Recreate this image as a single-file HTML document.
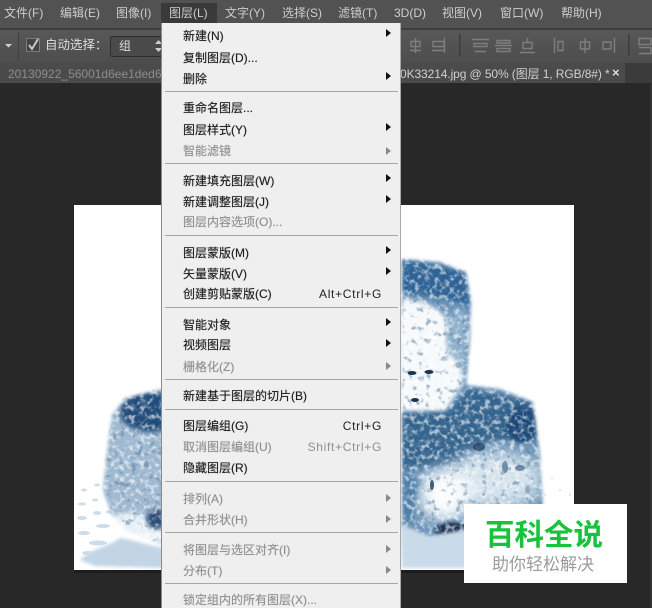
<!DOCTYPE html>
<html><head><meta charset="utf-8">
<style>
html,body{margin:0;padding:0;background:#282828}
#r{position:relative;width:652px;height:608px;overflow:hidden;background:#282828;font-family:"Liberation Sans","Noto Sans CJK SC",sans-serif;font-size:12px}
.a{position:absolute;white-space:nowrap}
.m{position:absolute;top:5px;color:#cdcdcd;line-height:16px}
.i{position:absolute;left:21px;margin-top:1px;line-height:16px;color:#1c1c1c;white-space:nowrap;text-shadow:0 0 .6px rgba(0,0,0,.55)}
.i.d{color:#8f8f8f;text-shadow:0 0 .6px rgba(120,120,120,.5)}
.s{position:absolute;left:3px;width:233px;height:1px;background:#a6a6a6}
.t{position:absolute;left:224px;width:0;height:0;border-left:5px solid #111;border-top:4px solid transparent;border-bottom:4px solid transparent}
.td{border-left-color:#888}
.k{position:absolute;right:18px;margin-top:1px;line-height:16px;color:#222;font-size:12px;letter-spacing:.7px}
.k.d{color:#8f8f8f}
</style></head><body>
<div id="r">
<div class="a" style="left:0;top:0;width:652px;height:28px;background:#525252"></div>
<div class="a" style="left:0;top:28px;width:652px;height:2px;background:#3d3d3d"></div>
<div class="a" style="left:0;top:30px;width:652px;height:33px;background:linear-gradient(#585858,#4d4d4d)"></div>
<div class="a" style="left:0;top:63px;width:652px;height:20px;background:#3b3b3b"></div>
<div class="a" style="left:0;top:63px;width:625px;height:20px;background:#4b4b4b"></div>
<div class="a" style="left:650px;top:83px;width:2px;height:525px;background:#333"></div>

<div class="a" style="left:161px;top:3px;width:56px;height:20px;background:#3a3a3a"></div>
<span class="m" style="left:4px">文件(F)</span>
<span class="m" style="left:60px">编辑(E)</span>
<span class="m" style="left:116px">图像(I)</span>
<span class="m" style="left:169px">图层(L)</span>
<span class="m" style="left:225px">文字(Y)</span>
<span class="m" style="left:282px">选择(S)</span>
<span class="m" style="left:338px">滤镜(T)</span>
<span class="m" style="left:394px">3D(D)</span>
<span class="m" style="left:442px">视图(V)</span>
<span class="m" style="left:500px">窗口(W)</span>
<span class="m" style="left:561px">帮助(H)</span>

<svg class="a" style="left:0;top:30px" width="652" height="33" viewBox="0 30 652 33">
<path d="M5 44h7l-3.500 3.500z" fill="#d0d0d0"/>
<rect x="18" y="32" width="1" height="28" fill="#404040"/>
<rect x="26.500" y="38.500" width="13" height="13" fill="#444" stroke="#7c7c7c"/>
<path d="M29 45l3 4 6-10" fill="none" stroke="#c8c8c8" stroke-width="2"/>
<rect x="110.500" y="36.500" width="60" height="20" rx="2" fill="#4a4a4a" stroke="#2e2e2e"/>
<path d="M155 44l3.500-4 3.500 4zM155 48l3.500 4 3.500-4z" fill="#cfcfcf"/>
<g fill="none" stroke="#7e7e7e" stroke-width="1.400">
<path d="M415.500 38v15M411 41.500h9v5h-9zM410 50.500h11"/>
<path d="M433 41.500h11v5h-11zM432 50.500h12M444.500 38v15"/>
<path d="M472 39.500h17M474 43.500h13v3h-13zM475 51.500h11"/>
<path d="M495 45.500h17M497 40.500h13v2.500h-13zM497 48.500h13v3h-13z"/>
<path d="M520 52.500h15M523 42.500h9v6h-9zM527.500 38v4"/>
<path d="M554.500 38v15M558 41.500h5v9h-5z"/>
<path d="M585 38v15M580.500 42h9v7h-9z"/>
<path d="M614.500 38v15M603 42h8v7h-8z"/>
<path d="M639 38.500h12v6h-12zM639 47.500h12v6h-12"/>
</g>
<rect x="459" y="34" width="1.500" height="22" fill="#3c3c3c"/>
<rect x="628" y="34" width="1.500" height="22" fill="#3c3c3c"/>
</svg>
<div class="a" style="left:45px;top:37px;line-height:16px;color:#dedede;font-size:12.500px">自动选择：</div>
<div class="a" style="left:119px;top:38px;line-height:16px;color:#dedede">组</div>
<div class="a" style="left:8px;top:66px;line-height:16px;color:#8d8d8d;font-size:12px">20130922_56001d6ee1ded6</div>
<div class="a" style="left:400px;top:66px;line-height:16px;color:#cfcfcf;font-size:12px;letter-spacing:-.1px">0K33214.jpg @ 50% (图层 1, RGB/8#) *</div>
<div class="a" style="left:612px;top:65px;line-height:16px;color:#ddd;font-size:13px;font-weight:bold">×</div>

<svg class="a" style="left:74px;top:205px" width="500" height="365" viewBox="74 205 500 365">
<defs>
<filter id="b" x="-20%" y="-20%" width="140%" height="140%"><feGaussianBlur stdDeviation="2.500"/></filter>
<filter id="be" x="-10%" y="-10%" width="120%" height="120%"><feGaussianBlur stdDeviation="1.500"/></filter>
<filter id="b2" x="-40%" y="-40%" width="180%" height="180%"><feGaussianBlur stdDeviation="8"/></filter>
<filter id="n" x="0" y="0" width="100%" height="100%">
<feTurbulence type="fractalNoise" baseFrequency="0.2" numOctaves="2" seed="7"/>
<feColorMatrix values="0 0 0 0 1 0 0 0 0 1 0 0 0 0 1 4 0 0 0 -1.900"/>
</filter>
<filter id="n2" x="0" y="0" width="100%" height="100%">
<feTurbulence type="fractalNoise" baseFrequency="0.16" numOctaves="2" seed="21"/>
<feColorMatrix values="0 0 0 0 0.090 0 0 0 0 0.200 0 0 0 0 0.350 0 5 0 0 -2.850"/>
</filter>
<mask id="c" maskUnits="userSpaceOnUse" x="74" y="205" width="500" height="365">
<g fill="#fff" filter="url(#be)">
<path d="M402 259L440 262 466 272 471 300 470 340 466 385 500 389 533 402 540 455 543 505 520 530 463 530 430 536 402 525z"/>
<path d="M165 388L125 398 112 415 107 450 103 490 112 515 125 530 165 545z"/>
</g>
</mask>
</defs>
<rect x="74" y="205" width="500" height="365" fill="#fff"/>
<!-- puddle and splash -->
<path d="M80 560C92 548 110 546 120 538 135 540 150 546 165 548L165 568 95 566z" fill="#c2d5e5" filter="url(#be)"/>
<g fill="#cddcea">
<ellipse cx="98" cy="543" rx="9" ry="2.500"/><ellipse cx="84" cy="533" rx="6" ry="2"/><ellipse cx="103" cy="526" rx="7" ry="2"/>
<ellipse cx="82" cy="518" rx="5" ry="2"/><ellipse cx="97" cy="513" rx="4" ry="2"/><ellipse cx="82" cy="504" rx="4" ry="1.500"/>
<ellipse cx="95" cy="500" rx="3" ry="1.500"/><ellipse cx="84" cy="490" rx="3" ry="1.500"/><ellipse cx="97" cy="485" rx="3" ry="1.500"/>
<ellipse cx="88" cy="553" rx="6" ry="2"/><ellipse cx="112" cy="512" rx="6" ry="2"/>
</g>
<path d="M400 522L470 530 470 568 402 568z" fill="#c9dbe9" filter="url(#be)"/>
<g mask="url(#c)">
<rect x="95" y="380" width="75" height="175" fill="#9fb9d1"/>
<ellipse cx="150" cy="412" rx="30" ry="20" fill="#234d7a" filter="url(#b)"/>
<ellipse cx="128" cy="525" rx="22" ry="12" fill="#e8f0f6" filter="url(#b)"/>
<ellipse cx="150" cy="535" rx="16" ry="8" fill="#eef4f8" filter="url(#b)"/>
<ellipse cx="156" cy="519" rx="9" ry="10" fill="#1f3f6a" filter="url(#b)" opacity=".9"/>
<rect x="400" y="255" width="150" height="285" fill="#6c95b9"/>
<path d="M400 258L466 272 470 305 440 298 400 292z" fill="#2f6496" filter="url(#b)"/>
<path d="M400 300C430 296 450 318 462 340L462 385 445 412 400 412z" fill="#f6f9fb" filter="url(#b)"/>
<ellipse cx="458" cy="335" rx="12" ry="26" fill="#8fb0cc" filter="url(#b)"/>
<path d="M400 413L447 412 470 388 533 402 538 440 490 440 450 465 400 470z" fill="#34658f" filter="url(#b)"/>
<ellipse cx="522" cy="425" rx="16" ry="18" fill="#1f4a78" filter="url(#b)"/>
<ellipse cx="495" cy="480" rx="48" ry="28" fill="#d5e3ed" filter="url(#b2)"/>
<ellipse cx="445" cy="495" rx="26" ry="26" fill="#fbfdfe" filter="url(#b2)"/>
<path d="M400 470L418 480 412 525 400 510z" fill="#4f7ea8" filter="url(#b)"/>
<ellipse cx="452" cy="530" rx="18" ry="8" fill="#1b3556" filter="url(#be)"/>
<rect x="95" y="255" width="455" height="300" filter="url(#n)" opacity=".6"/>
<rect x="95" y="255" width="455" height="300" filter="url(#n2)" opacity=".55"/>
</g>
<ellipse cx="412" cy="373" rx="4.500" ry="2" fill="#1d3350"/><ellipse cx="429" cy="372" rx="4.500" ry="2" fill="#1d3350"/>
<ellipse cx="415" cy="400" rx="4" ry="2" fill="#1d3350"/>
<ellipse cx="479" cy="447" rx="6" ry="4" fill="#1f3c5e" opacity=".75"/>
<ellipse cx="505" cy="467" rx="3" ry="6" fill="#2f5378" opacity=".6"/><ellipse cx="520" cy="468" rx="5" ry="3" fill="#2f5378" opacity=".6"/>
<ellipse cx="432" cy="485" rx="2" ry="5" fill="#1d3350" opacity=".8"/>
<g fill="#d8e4ee"><circle cx="560" cy="490" r="1.200"/><circle cx="552" cy="478" r="1"/><circle cx="570" cy="495" r="1.200"/><circle cx="545" cy="495" r="1"/></g>
</svg>
<div class="a" style="left:74px;top:570px;width:90px;height:3px;background:#1d1d1d"></div>
<div class="a" style="left:400px;top:570px;width:64px;height:3px;background:#1d1d1d"></div>

<div class="a" style="left:464px;top:504px;width:163px;height:79px;background:#fff"></div>
<div class="a" style="left:485px;top:518px;font-size:29.500px;line-height:36px;font-weight:bold;color:#19c23c">百科全说</div>
<div class="a" style="left:492px;top:554px;font-size:17px;line-height:22px;color:#9b9b9b">助你轻松解决</div>

<div class="a" style="left:161px;top:23px;width:240px;height:585px;background:#efefef;border-left:1px solid #8a8a8a;border-right:1px solid #a8a8a8;box-sizing:border-box">
<div class="i" style="top:4px">新建(N)</div><div class="t" style="top:6px"></div>
<div class="i" style="top:26px">复制图层(D)...</div>
<div class="i" style="top:47px">删除</div><div class="t" style="top:49px"></div>
<div class="s" style="top:68px"></div>
<div class="i" style="top:76px">重命名图层...</div>
<div class="i" style="top:98px">图层样式(Y)</div><div class="t" style="top:100px"></div>
<div class="i d" style="top:119px">智能滤镜</div><div class="t td" style="top:124px"></div>
<div class="s" style="top:140px"></div>
<div class="i" style="top:149px">新建填充图层(W)</div><div class="t" style="top:151px"></div>
<div class="i" style="top:170px">新建调整图层(J)</div><div class="t" style="top:172px"></div>
<div class="i d" style="top:190px">图层内容选项(O)...</div>
<div class="s" style="top:212px"></div>
<div class="i" style="top:221px">图层蒙版(M)</div><div class="t" style="top:223px"></div>
<div class="i" style="top:242px">矢量蒙版(V)</div><div class="t" style="top:244px"></div>
<div class="i" style="top:262px">创建剪贴蒙版(C)</div><div class="k" style="top:262px">Alt+Ctrl+G</div>
<div class="s" style="top:284px"></div>
<div class="i" style="top:293px">智能对象</div><div class="t" style="top:295px"></div>
<div class="i" style="top:313px">视频图层</div><div class="t" style="top:316px"></div>
<div class="i d" style="top:335px">栅格化(Z)</div><div class="t td" style="top:339px"></div>
<div class="s" style="top:356px"></div>
<div class="i" style="top:364px">新建基于图层的切片(B)</div>
<div class="s" style="top:386px"></div>
<div class="i" style="top:394px">图层编组(G)</div><div class="k" style="top:394px">Ctrl+G</div>
<div class="i d" style="top:415px">取消图层编组(U)</div><div class="k d" style="top:415px">Shift+Ctrl+G</div>
<div class="i" style="top:436px">隐藏图层(R)</div>
<div class="s" style="top:458px"></div>
<div class="i d" style="top:467px">排列(A)</div><div class="t td" style="top:471px"></div>
<div class="i d" style="top:488px">合并形状(H)</div><div class="t td" style="top:492px"></div>
<div class="s" style="top:509px"></div>
<div class="i d" style="top:518px">将图层与选区对齐(I)</div><div class="t td" style="top:522px"></div>
<div class="i d" style="top:539px">分布(T)</div><div class="t td" style="top:543px"></div>
<div class="s" style="top:560px"></div>
<div class="i d" style="top:568px">锁定组内的所有图层(X)...</div>
</div>
</div>
</body></html>
